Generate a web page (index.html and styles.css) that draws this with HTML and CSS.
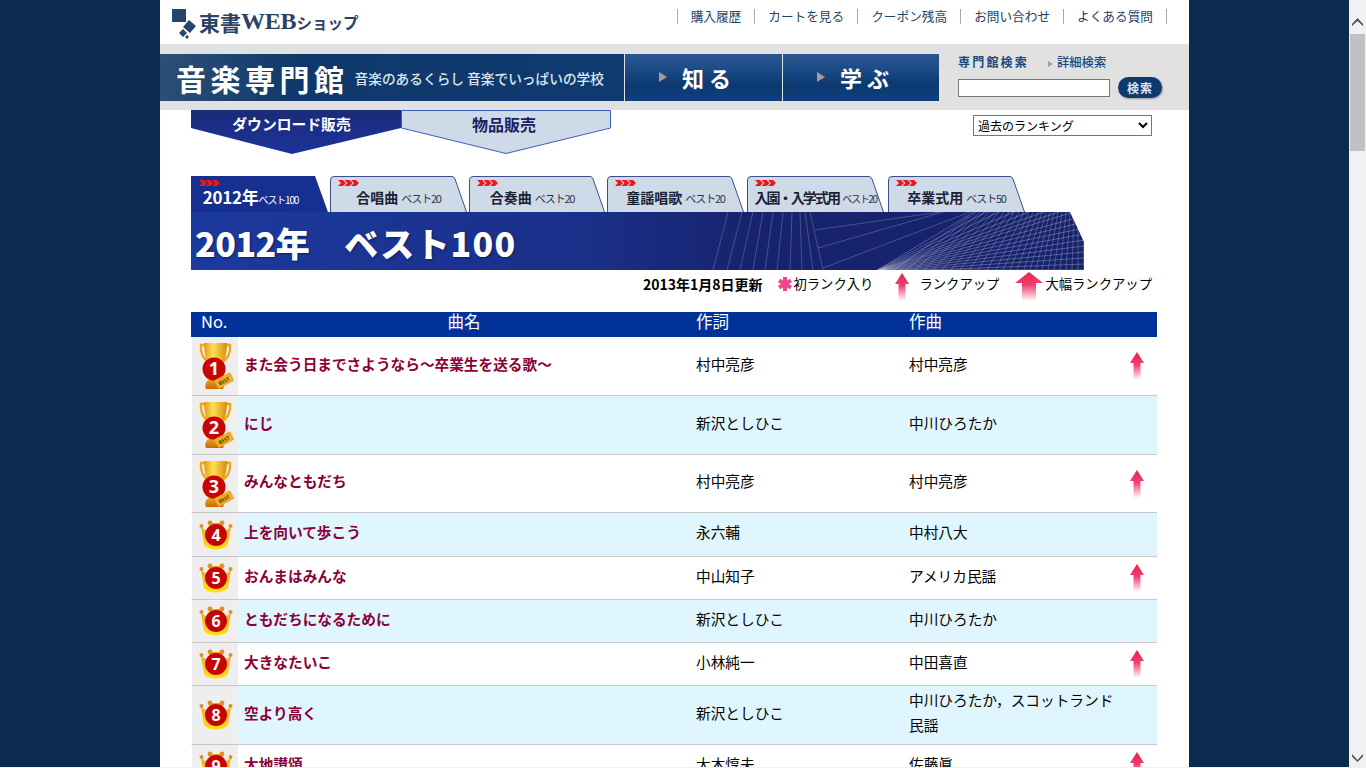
FILE: index.html
```html
<!DOCTYPE html>
<html lang="ja">
<head>
<meta charset="utf-8">
<title>音楽専門館 ランキング</title>
<link rel="stylesheet" href="styles.css">
</head>
<body>
<svg class="defs" width="0" height="0" aria-hidden="true">
  <defs>
    <linearGradient id="up" x1="0" y1="0" x2="0" y2="1"><stop offset="0" stop-color="#e8204f"/><stop offset=".45" stop-color="#f0406e"/><stop offset="1" stop-color="#f0406e" stop-opacity="0"/></linearGradient>
    <linearGradient id="gold" x1="0" y1="0" x2="1" y2="0"><stop offset="0" stop-color="#e59a10"/><stop offset=".4" stop-color="#ffe05a"/><stop offset="1" stop-color="#d98a08"/></linearGradient>
    <linearGradient id="crownfill" x1="0" y1="0" x2="0" y2="1"><stop offset="0" stop-color="#f0a020"/><stop offset="1" stop-color="#ffe21c"/></linearGradient>
    <linearGradient id="basefill" x1="0" y1="0" x2="0" y2="1"><stop offset="0" stop-color="#f0b020"/><stop offset="1" stop-color="#c86a08"/></linearGradient>
    <symbol id="arrow" viewBox="0 0 14 28"><path d="M7 0 14 11H10.500V28H3.500V11H0Z" fill="url(#up)"/></symbol>
    <symbol id="arrow-big" viewBox="0 0 28 29"><path d="M14 0 28 11H21V29H7V11H0Z" fill="url(#up)"/></symbol>
    <symbol id="trophy" viewBox="0 0 38 48">
      <path d="M8 3H3C2 10 5 17 11 20M27 3H32C33 10 30 17 24 20" fill="none" stroke="#eda915" stroke-width="2.400"/>
      <path d="M6 1H29C29 12 27 20 20 26V34H15V26C8 20 6 12 6 1Z" fill="url(#gold)"/>
      <path d="M8 47C6 43 8 38 14 36H22C26 38 27 43 25 47Z" fill="url(#basefill)"/>
      <circle cx="16" cy="27" r="11.500" fill="#c80505"/>
      <rect x="17.500" y="34" width="18" height="9.500" rx="1" transform="rotate(-28 26 39)" fill="#eeb02a"/>
    </symbol>
    <symbol id="crown" viewBox="0 0 34 30">
      <path d="M2 7 9 12 11 3H23L25 12 32 7 29 25C25 31 9 31 5 25Z" fill="url(#crownfill)"/>
      <g fill="#e0902a"><circle cx="2.500" cy="6" r="2"/><circle cx="11" cy="3" r="2.400"/><circle cx="23" cy="3" r="2.400"/><circle cx="31.500" cy="6" r="2"/></g>
      <circle cx="17" cy="15" r="11" fill="#c80505"/>
    </symbol>
    <symbol id="chevrons" viewBox="0 0 21 6"><path d="M0 0H5L8 3 5 6H0L3 3ZM6.500 0H11.500L14.500 3 11.500 6H6.500L9.500 3ZM13 0H18L21 3 18 6H13L16 3Z" fill="#e8181c"/></symbol>
    <symbol id="tabshape" viewBox="0 0 137 36" preserveAspectRatio="none"><path d="M.5 36V4Q.5.5 4 .5H122Q124 .5 125 3L136.5 36" fill="#cfdae8" stroke="#3a4f8c"/></symbol>
  </defs>
</svg>
<div class="screen">
  <div class="viewport">
  <div class="page">
    <header class="top">
      <a class="logo">
        <svg class="logo-mark" width="27" height="30" viewBox="0 0 27 30"><path d="M0 0H14V13H0Z M17 11 24 17 18 24 11 18Z M11 20 15 24 11 28 7 24Z M15 26 17 28 15 30 13 28Z" fill="#27466e"/></svg>
        <span class="logo-jp">東書</span><span class="logo-en">WEB</span><span class="logo-kana">ショップ</span>
      </a>
      <nav class="top-nav">
        <a>購入履歴</a><a>カートを見る</a><a>クーポン残高</a><a>お問い合わせ</a><a>よくある質問</a>
      </nav>
    </header>

    <div class="band">
      <div class="brand">
        <span class="brand-name">音楽専門館</span>
        <span class="brand-sub">音楽のあるくらし 音楽でいっぱいの学校</span>
      </div>
      <a class="band-link"><i class="tri"></i>知 る</a>
      <a class="band-link"><i class="tri"></i>学 ぶ</a>
      <form class="search">
        <div class="search-labels"><b>専門館検索</b><span><i class="tri-s"></i>詳細検索</span></div>
        <div class="search-row"><input class="search-input" type="text"><button class="search-btn" type="button">検索</button></div>
      </form>
    </div>

    <main class="content">
      <div class="sales-row">
        <div class="sales-tabs">
          <a class="sale sale-on">
            <svg class="sale-shape" viewBox="0 0 210 44"><defs><linearGradient id="dl" x1="0" y1="0" x2="0" y2="1"><stop offset="0" stop-color="#1b2b78"/><stop offset="1" stop-color="#1b349c"/></linearGradient></defs><path d="M0 0H210V18L101 44 0 18Z" fill="url(#dl)"/></svg>
            <span class="sale-label sale-label-on">ダウンロード販売</span>
          </a>
          <a class="sale">
            <svg class="sale-shape" viewBox="0 0 210 44"><path d="M.5 .5H209.500V18L105 43.500 .5 18Z" fill="#cfdae8" stroke="#3e5cc0"/></svg>
            <span class="sale-label sale-label-off">物品販売</span>
          </a>
        </div>
        <select class="past"><option>過去のランキング</option></select>
      </div>

      <div class="tabs">
        <a class="tab tab-on">
          <svg class="tab-shape" viewBox="0 0 137 36" preserveAspectRatio="none"><path d="M0 36V0H124L137 36Z" fill="#17308f"/></svg>
          <svg class="tab-chev"><use href="#chevrons"/></svg>
          <span class="tab-label"><b class="tab-year">2012年</b><small class="tab-note">ベスト100</small></span>
        </a>
        <a class="tab"><svg class="tab-shape"><use href="#tabshape"/></svg><svg class="tab-chev"><use href="#chevrons"/></svg><span class="tab-label"><b>合唱曲</b> <small class="tab-note">ベスト20</small></span></a>
        <a class="tab tab-narrow"><svg class="tab-shape"><use href="#tabshape"/></svg><svg class="tab-chev"><use href="#chevrons"/></svg><span class="tab-label"><b>合奏曲</b> <small class="tab-note">ベスト20</small></span></a>
        <a class="tab"><svg class="tab-shape"><use href="#tabshape"/></svg><svg class="tab-chev"><use href="#chevrons"/></svg><span class="tab-label"><b>童謡唱歌</b> <small class="tab-note">ベスト20</small></span></a>
        <a class="tab tab-gap"><svg class="tab-shape"><use href="#tabshape"/></svg><svg class="tab-chev"><use href="#chevrons"/></svg><span class="tab-label tab-tight"><b>入園・入学式用</b> <small class="tab-note">ベスト20</small></span></a>
        <a class="tab tab-gap2"><svg class="tab-shape"><use href="#tabshape"/></svg><svg class="tab-chev"><use href="#chevrons"/></svg><span class="tab-label"><b>卒業式用</b> <small class="tab-note">ベスト50</small></span></a>
      </div>

      <div class="hero">
        <h1 class="hero-title"><span>2012年</span><span class="hero-best">ベスト100</span></h1>
        <svg class="hero-lines" viewBox="0 0 400 58" width="400" height="58">
          <path stroke-opacity=".3" d="M44 0 29 58M58 0 43 58M69 0 56 58M79 0 69 58M89 0 81 58M99 0 93 58M108 0 106 58M116 0 118 58M121 0 129 58M126 0 139 58M131 18 256 0M134 36 259 0M139 56 286 0"/>
          <path stroke-opacity=".38" d="M190 60 290 0M190 60 302 0M190 60 315 0M190 60 330 0M190 60 345 0M190 60 360 0M190 60 375 0M190 60 390 0M190 60 400 4M190 60 400 10M190 60 400 16M190 60 400 22M190 60 400 28M190 60 400 34M190 60 400 40M190 60 400 46M190 60 400 52M215 58 400 58"/>
          <path stroke-opacity=".32" d="M292 0 222 58M296 0 231 58M300 0 240 58M305 0 249 58M310 0 258 58M315 0 267 58M320 0 276 58M325 0 285 58M330 0 294 58M335 0 303 58M340 0 312 58M345 0 319 58M349 0 326 58M354 0 333 58M358 0 340 58M362 0 346 58M366 0 352 58M370 0 358 58M374 0 364 58M378 0 370 58M382 0 376 58M386 0 382 58M390 0 388 58M394 0 394 58M398 0 400 58M285 4 210 58"/>
        </svg>
      </div>

      <div class="legend">
        <b class="legend-date">2013年1月8日更新</b>
        <span class="legend-item legend-new"><svg width="16" height="16" viewBox="0 0 16 16"><path d="M8 1V15M2 4.500 14 11.500M14 4.500 2 11.500" stroke="#f0468c" stroke-width="4"/></svg>初ランク入り</span>
        <span class="legend-item legend-up"><svg class="legend-arrow" width="16" height="28"><use href="#arrow"/></svg>ランクアップ</span>
        <span class="legend-item legend-big"><svg class="legend-arrow" width="28" height="29"><use href="#arrow-big"/></svg>大幅ランクアップ</span>
      </div>

      <table class="rank">
        <colgroup><col class="c-no"><col class="c-title"><col class="c-lyr"><col class="c-comp"><col class="c-mark"></colgroup>
        <thead><tr><th class="th-no">No.</th><th class="th-title">曲名</th><th>作詞</th><th>作曲</th><th></th></tr></thead>
        <tbody>
          <tr class="r59"><td class="no"><svg class="trophy" width="38" height="48" viewBox="0 0 38 48"><use href="#trophy"/><text x="16" y="33" class="num num-big">1</text><text x="26" y="41" class="best" transform="rotate(-28 26 39)">BEST</text></svg></td><td class="title">また会う日までさようなら～卒業生を送る歌～</td><td>村中亮彦</td><td>村中亮彦</td><td class="mark"><svg width="14" height="28"><use href="#arrow"/></svg></td></tr>
          <tr class="r59 alt"><td class="no"><svg class="trophy" width="38" height="48" viewBox="0 0 38 48"><use href="#trophy"/><text x="16" y="33" class="num num-big">2</text><text x="26" y="41" class="best" transform="rotate(-28 26 39)">BEST</text></svg></td><td class="title">にじ</td><td>新沢としひこ</td><td>中川ひろたか</td><td class="mark"></td></tr>
          <tr class="r58"><td class="no"><svg class="trophy" width="38" height="48" viewBox="0 0 38 48"><use href="#trophy"/><text x="16" y="33" class="num num-big">3</text><text x="26" y="41" class="best" transform="rotate(-28 26 39)">BEST</text></svg></td><td class="title">みんなともだち</td><td>村中亮彦</td><td>村中亮彦</td><td class="mark"><svg width="14" height="28"><use href="#arrow"/></svg></td></tr>
          <tr class="r44 alt"><td class="no"><svg class="crown" width="34" height="30" viewBox="0 0 34 30"><use href="#crown"/><text x="17" y="20.500" class="num">4</text></svg></td><td class="title">上を向いて歩こう</td><td>永六輔</td><td>中村八大</td><td class="mark"></td></tr>
          <tr class="r43"><td class="no"><svg class="crown" width="34" height="30" viewBox="0 0 34 30"><use href="#crown"/><text x="17" y="20.500" class="num">5</text></svg></td><td class="title">おんまはみんな</td><td>中山知子</td><td>アメリカ民謡</td><td class="mark"><svg width="14" height="28"><use href="#arrow"/></svg></td></tr>
          <tr class="r43 alt"><td class="no"><svg class="crown" width="34" height="30" viewBox="0 0 34 30"><use href="#crown"/><text x="17" y="20.500" class="num">6</text></svg></td><td class="title">ともだちになるために</td><td>新沢としひこ</td><td>中川ひろたか</td><td class="mark"></td></tr>
          <tr class="r43"><td class="no"><svg class="crown" width="34" height="30" viewBox="0 0 34 30"><use href="#crown"/><text x="17" y="20.500" class="num">7</text></svg></td><td class="title">大きなたいこ</td><td>小林純一</td><td>中田喜直</td><td class="mark"><svg width="14" height="28"><use href="#arrow"/></svg></td></tr>
          <tr class="r59 alt"><td class="no"><svg class="crown" width="34" height="30" viewBox="0 0 34 30"><use href="#crown"/><text x="17" y="20.500" class="num">8</text></svg></td><td class="title">空より高く</td><td>新沢としひこ</td><td class="wrap">中川ひろたか，スコットランド民謡</td><td class="mark"></td></tr>
          <tr class="r43"><td class="no"><svg class="crown" width="34" height="30" viewBox="0 0 34 30"><use href="#crown"/><text x="17" y="20.500" class="num">9</text></svg></td><td class="title">大地讃頌</td><td>大木惇夫</td><td>佐藤眞</td><td class="mark"><svg width="14" height="28"><use href="#arrow"/></svg></td></tr>
        </tbody>
      </table>
    </main>
  </div>
  </div>
  <aside class="scrollbar">
    <svg class="sb-arrow" width="17" height="34" viewBox="0 0 17 34"><path d="M3 24 8.500 18 14 24 14 26 8.500 21 3 26Z" fill="#505050"/></svg>
    <div class="sb-thumb"></div>
    <svg class="sb-arrow sb-down" width="17" height="17" viewBox="0 0 17 17"><path d="M3 4 8.500 10 14 4 14 6.500 8.500 12 3 6.500Z" fill="#505050"/></svg>
  </aside>
</div>
<div class="strip"></div>
</body>
</html>
```
FILE: styles.css
```css
* { box-sizing: border-box; }
html, body { margin: 0; height: 100%; overflow: hidden; }
body {
  background: #0a2b4d;
  color: #000;
  font-family: "Noto Sans CJK JP", "Noto Sans", sans-serif;
  font-size: 14.67px;
}
.defs { position: absolute; }
.screen { display: flex; height: 767px; overflow: hidden; }
.strip { height: 1px; background: #f0f0f0; }
.viewport { flex: 1; min-width: 0; }
.page { width: 1029px; margin: 0 auto; background: #fff; height: 100%; overflow: hidden; }

/* top */
.top { height: 44px; display: flex; justify-content: space-between; padding: 9px 22px 0 12px; }
.logo { display: flex; align-items: center; height: 30px; color: #2c4264; font-weight: 700; }
.logo-jp { font-size: 21px; padding-bottom: 5px; }
.logo-en { font-family: "Liberation Serif", serif; font-size: 24px; letter-spacing: -.2px; padding-bottom: 5px; }
.logo-kana { font-size: 15.5px; padding-bottom: 5px; }
.top-nav { display: flex; height: 15px; border-right: 1px solid #aaa; font-size: 12.67px; line-height: 13px; color: #1e4466; }
.top-nav a { padding: 0 13px; border-left: 1px solid #aaa; }

/* band */
.band { height: 66px; background: #e1e1e1; padding-top: 10px; display: flex; align-items: flex-start; }
.brand {
  width: 464px; height: 47px; flex: none; display: flex; align-items: center; padding-left: 16px; color: #fff;
  background: linear-gradient(100deg, #2b5078 0, #10386a 30%, #0e3a70 100%);
}
.brand-name { font-size: 30px; font-weight: 700; letter-spacing: 4.5px; line-height: 1; }
.brand-sub { font-size: 13.7px; margin-left: 6px; color: #dfe6ee; font-weight: 500; white-space: nowrap; }
.band-link {
  width: 157px; height: 47px; flex: none; margin-left: 1px; display: flex; align-items: center; padding-left: 34px;
  color: #fff; font-size: 22px; font-weight: 700; padding-bottom: 2px;
  background: linear-gradient(#2c5690 0, #1a4a84 35%, #0c3a70 65%, #0d4080 100%);
}
.band-link + .band-link { width: 156px; }
.tri { width: 0; height: 0; border-left: 8px solid #a89c92; border-top: 5px solid transparent; border-bottom: 5px solid transparent; margin-right: 15px; }
.search { margin-left: 19px; width: 210px; }
.search-labels { display: flex; height: 16px; align-items: center; font-size: 12px; color: #1b4a80; line-height: 16px; }
.search-labels b { letter-spacing: 2.2px; width: 90px; }
.search-labels span { font-size: 12.3px; font-weight: 500; }
.tri-s { display: inline-block; border-left: 5px solid #a89c92; border-top: 3px solid transparent; border-bottom: 3px solid transparent; margin-right: 4px; }
.search-row { display: flex; align-items: center; margin-top: 7px; }
.search-input { width: 152px; height: 18px; border: 1px solid #777; background: #fff; padding: 0; }
.search-btn {
  width: 44px; height: 21px; margin-left: 8px; border: 0; border-radius: 11px; padding: 0;
  background: #0f3a6e; color: #dfe6ee; font: 700 12px/20px "Noto Sans CJK JP", sans-serif; letter-spacing: 1px;
  box-shadow: 1px 1px 2px #999;
}

/* content */
.content { padding: 0 32px 0 31px; }
.sales-row { display: flex; justify-content: space-between; height: 66px; }
.sales-tabs { display: flex; }
.sale { position: relative; display: block; width: 210px; height: 44px; }
.sale-shape { display: block; width: 210px; height: 44px; }
.sale-label { position: absolute; left: 0; right: 0; top: 2px; text-align: center; font-weight: 700; font-size: 14.8px; line-height: 24px; color: #fff; }
.sale-label-on { right: 9px; }
.sale-label-off { font-size: 16px; color: #1a2060; right: 4px; }
.past { width: 179px; height: 21px; margin: 5px 5px 0 0; border: 1px solid #767676; background: #fff; font: 12px/17px "Noto Sans CJK JP", sans-serif; padding: 0 0 2px; color: #000; border-radius: 0; }

.tabs { display: flex; gap: 2px; height: 36px; }
.tab { position: relative; display: flex; justify-content: center; width: 137px; height: 36px; flex: none; }
.tab-narrow { width: 136px; padding-right: 10px; }
.tab-gap { margin-left: 1px; }
.tab-gap2 { margin-left: 2px; }
.tab-shape { position: absolute; inset: 0; width: 100%; height: 100%; }
.tab-chev { position: absolute; left: 8px; top: 4px; width: 21px; height: 6px; }
.tab-label { position: relative; margin-top: 11px; font-size: 14px; line-height: 20px; color: #1a2233; white-space: nowrap; }
.tab-note { font-size: 11px; letter-spacing: -1.2px; color: #2a3448; }
.tab-on { padding-right: 18px; }
.tab-on .tab-label { color: #fff; }
.tab-on .tab-note { color: #fff; font-size: 10px; }
.tab-year { font-size: 17px; letter-spacing: -.3px; }
.tab-tight b { letter-spacing: -1.9px; }
.tab-tight .tab-note { font-size: 10px; letter-spacing: -1.4px; }

.hero {
  position: relative; width: 893px; height: 58px; display: flex; align-items: center; overflow: hidden;
  background: linear-gradient(90deg, #1b3a9e 0, #1a2f88 45%, #17236e 62%, #17226c 100%);
  clip-path: polygon(0 0, 879px 0, 893px 30px, 893px 58px, 0 58px);
}
.hero-title { margin: 4px 0 0 4px; display: flex; gap: 35px; font-size: 34px; line-height: 58px; font-weight: 900; color: #fff; letter-spacing: -.5px; text-shadow: 1px 1px 2px rgba(10,20,70,.7); }
.hero-best { letter-spacing: 1.2px; }
.hero-lines { position: absolute; right: 0; top: 0; fill: none; stroke: #fff; stroke-width: .7; }

.legend { display: flex; align-items: center; justify-content: flex-end; height: 42px; padding: 0 5px 14px 0; font-size: 13.33px; line-height: 28px; }
.legend-date { font-size: 14px; }
.legend-item { display: flex; align-items: center; }
.legend-new { margin-left: 15px; }
.legend-up { margin-left: 21px; }
.legend-big { margin-left: 16px; }
.legend-arrow { margin-top: 5px; }
.legend-up .legend-arrow { margin-right: 9px; }
.legend-big .legend-arrow { margin-right: 2px; }

.rank { width: 966px; table-layout: fixed; border-collapse: separate; border-spacing: 0; }
.c-no { width: 47px; }
.c-title { width: 452px; }
.c-lyr { width: 213px; }
.c-comp { width: 220px; }
.c-mark { width: 34px; }
.rank th { height: 25px; padding: 0 0 6px 6px; background: #00329a; color: #fff; font-weight: 400; font-size: 16.5px; line-height: 19px; text-align: left; }
.rank .th-no { padding-left: 10px; }
.rank .th-title { padding: 0 0 6px; text-align: center; }
.rank td { padding: 0 6px 6px; border-bottom: 1px solid #c8c8c8; line-height: 25px; vertical-align: middle; }
.rank .no { padding: 0; background: #eee; border-left: 1px solid #fff; }
.rank .title { color: #8a0038; font-weight: 700; }
.rank .mark { padding: 0 0 0 7px; }
.rank .mark svg { display: block; }
.rank .wrap { padding-right: 8px; }
.r59 { height: 59px; }
.r58 { height: 58px; }
.r44 { height: 44px; }
.r43 { height: 43px; }
.alt td { background: #e0f6fe; }
.alt .no { background: #eee; }
.trophy { display: block; margin-left: 6px; }
.crown { display: block; margin-left: 7px; }
.num { fill: #fff; font: 700 16px "Noto Sans", sans-serif; text-anchor: middle; }
.num-big { font-size: 18px; }
.best { fill: #5a3808; font: 700 5px "Noto Sans", sans-serif; text-anchor: middle; }

/* scrollbar */
.scrollbar { width: 17px; flex: none; background: #f1f1f1; display: flex; flex-direction: column; }
.sb-arrow { display: block; flex: none; }
.sb-thumb { height: 117px; margin: 0 1px; background: #c1c1c1; flex: none; }
.sb-down { margin-top: auto; }
```
